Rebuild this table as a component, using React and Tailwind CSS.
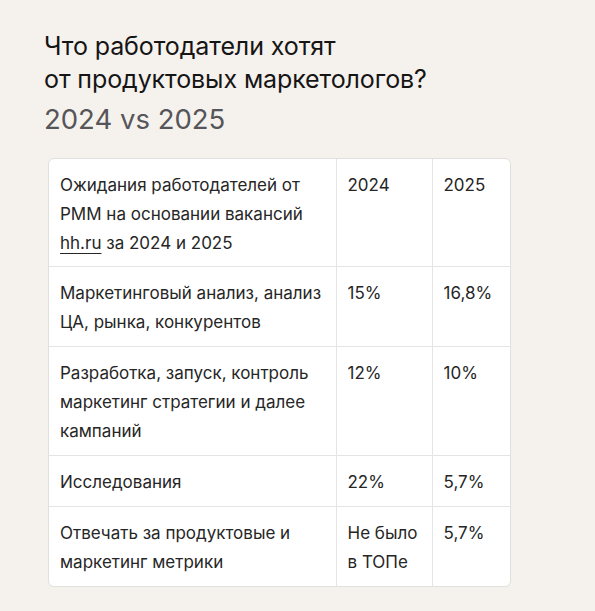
const rows = [
  {
    label: (
      <>
        Ожидания работодателей от РММ на основании вакансий{' '}
        <span className="underline decoration-1 underline-offset-4">hh.ru</span> за 2024 и 2025
      </>
    ),
    a: '2024',
    b: '2025',
  },
  { label: 'Маркетинговый анализ, анализ ЦА, рынка, конкурентов', a: '15%', b: '16,8%' },
  { label: 'Разработка, запуск, контроль маркетинг стратегии и далее кампаний', a: '12%', b: '10%' },
  { label: 'Исследования', a: '22%', b: '5,7%' },
  { label: 'Отвечать за продуктовые и маркетинг метрики', a: 'Не было в ТОПе', b: '5,7%' },
];

const App = () => {
  return (
    <div className="w-[595px] h-[611px] bg-[#f5f1ec] pt-[30px] pl-[44px] font-['Inter',sans-serif] text-[#1f1f1f]">
      <h1 className="text-[25px] leading-[33px] tracking-[-0.1px] text-[#151515]">
        Что работодатели хотят
        <br />
        от продуктовых маркетологов?
      </h1>
      <p className="mt-[5px] text-[27.5px] leading-[36px] text-[#55555a]">2024 vs 2025</p>
      <div className="mt-[21px] ml-[4px] w-[463px] bg-white border border-[#e2e0dd] rounded-[6px] overflow-hidden">
        <table className="w-full border-collapse text-[17px] leading-[29px] text-[#262626]">
          <tbody>
            {rows.map((r, i) => {
              const pad = i === 0 ? 'pt-[12px] pb-[8px]' : 'pt-[12px] pb-[9px]';
              return (
                <tr key={i} className={i > 0 ? 'border-t border-[#e4e4e4]' : ''}>
                  <td className={`w-[287px] align-top ${pad} pl-[11px] pr-[10px] border-r border-[#e4e4e4]`}>
                    {r.label}
                  </td>
                  <td className={`w-[96px] align-top ${pad} px-[11px] border-r border-[#e4e4e4]`}>
                    {r.a}
                  </td>
                  <td className={`align-top ${pad} px-[11px]`}>{r.b}</td>
                </tr>
              );
            })}
          </tbody>
        </table>
      </div>
    </div>
  );
};

export default App;
